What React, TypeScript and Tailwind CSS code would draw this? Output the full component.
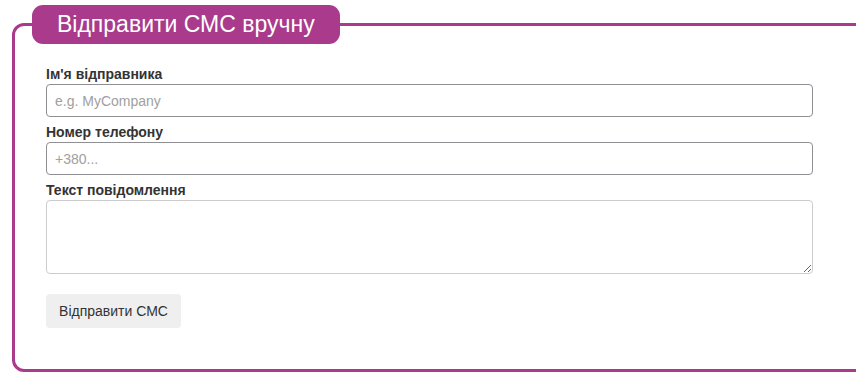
import { useState } from 'react';

export default function App() {
  const [sender, setSender] = useState('');
  const [phone, setPhone] = useState('');
  const [text, setText] = useState('');

  return (
    <div
      className="h-[383px] w-[856px] overflow-hidden bg-white pt-[5px] pl-3"
      style={{ fontFamily: '"Liberation Sans", Arial, sans-serif' }}
    >
      <fieldset className="m-0 w-[900px] rounded-[12px] border-[3px] border-[#a93a8c] p-0">
        <legend className="ml-[17px] rounded-[11px] bg-[#a93a8c] px-[25px] py-[5px] text-[23px] leading-[29px] text-white">
          Відправити СМС вручну
        </legend>

        <form
          className="flex flex-col pt-[20px] pb-[41px] pl-[31px]"
          onSubmit={(e) => e.preventDefault()}
        >
          <label className="text-[14px] leading-[20px] font-bold text-[#333]">
            Ім&#39;я відправника
          </label>
          <input
            type="text"
            value={sender}
            onChange={(e) => setSender(e.target.value)}
            placeholder="e.g. MyCompany"
            className="h-[33px] w-[767px] rounded-[4px] border border-[#8f8f94] px-2 text-[14px] text-[#333] outline-none placeholder:text-[#a0a0a0]"
          />

          <label className="mt-[5px] text-[14px] leading-[20px] font-bold text-[#333]">
            Номер телефону
          </label>
          <input
            type="text"
            value={phone}
            onChange={(e) => setPhone(e.target.value)}
            placeholder="+380..."
            className="h-[33px] w-[767px] rounded-[4px] border border-[#8f8f94] px-2 text-[14px] text-[#333] outline-none placeholder:text-[#a0a0a0]"
          />

          <label className="mt-[5px] text-[14px] leading-[20px] font-bold text-[#333]">
            Текст повідомлення
          </label>
          <textarea
            value={text}
            onChange={(e) => setText(e.target.value)}
            className="h-[74px] w-[767px] resize rounded-[4px] border border-[#cccccc] px-2 py-1 text-[14px] text-[#333] outline-none"
          />

          <div className="mt-[20px]">
            <button
              type="submit"
              className="h-[34px] w-[135px] rounded-[4px] bg-[#efefef] text-[14px] text-[#333]"
            >
              Відправити СМС
            </button>
          </div>
        </form>
      </fieldset>
    </div>
  );
}
